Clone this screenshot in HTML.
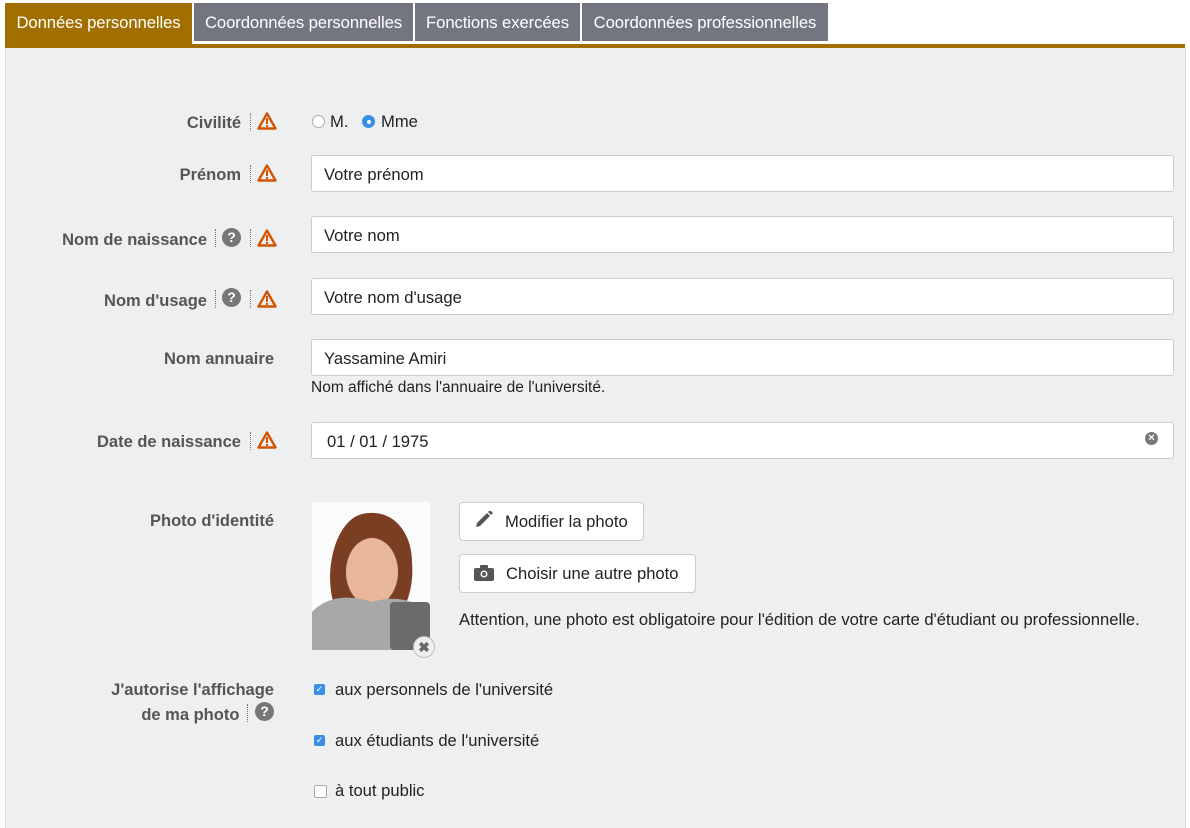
<!DOCTYPE html>
<html><head><meta charset="utf-8"><style>
body{margin:0;background:#fff;font-family:"Liberation Sans",Arial,sans-serif;width:1190px;height:821px;overflow:hidden;position:relative;color:#333}
.tab{position:absolute;top:3px;height:38px;line-height:39px;color:#fff;font-size:16.7px;text-align:center;background:#737680;letter-spacing:-0.1px}
.bar{position:absolute;left:5px;top:44px;width:1180px;height:4px;background:#a06f00}
.panel{position:absolute;left:5px;top:48px;width:1179px;height:780px;background:#eeeff1;border-left:1px solid #ddd;border-right:1px solid #ddd}
.lbl{position:absolute;font-weight:bold;font-size:16.5px;color:#555;text-align:right}
.inp{position:absolute;left:311px;width:863px;height:37px;background:#fff;border:1px solid #ccc;border-radius:3px;font-size:16.6px;line-height:37px;padding-left:12px;box-sizing:border-box;color:#222}
.sep{position:absolute;width:0;height:18px;border-left:1px dotted #777}
.warn{position:absolute;width:20px;height:18px}
.help{position:absolute;width:19px;height:19px;border-radius:50%;background:#777;color:#fff;font-weight:bold;font-size:14px;text-align:center;line-height:19px}
.txt{position:absolute;font-size:16.6px;color:#222}
.btn{position:absolute;left:459px;height:39px;background:#fff;border:1px solid #ccc;border-radius:4px;box-sizing:border-box;font-size:16.6px;line-height:37px;color:#222}
.cb{position:absolute;left:314px;width:11px;height:11px;border-radius:2px}
</style></head><body>
<div class="tab" style="left:5px;width:187px;background:#a06f00;height:44px">Données personnelles</div>
<div class="tab" style="left:194px;width:219px">Coordonnées personnelles</div>
<div class="tab" style="left:415px;width:165px">Fonctions exercées</div>
<div class="tab" style="left:582px;width:246px">Coordonnées professionnelles</div>
<div class="bar"></div>
<div class="panel"></div>

<svg width="0" height="0" style="position:absolute"><defs><symbol id="w" viewBox="0 0 20 18"><path d="M10 1.5 L18.5 16.5 H1.5 Z" fill="none" stroke="#d35400" stroke-width="2.4" stroke-linejoin="round"/><rect x="9" y="6" width="2" height="6" fill="#d35400"/><rect x="9" y="13" width="2" height="2" fill="#d35400"/></symbol></defs></svg>

<div class="lbl" style="right:949px;top:114px">Civilité</div>
<div class="sep" style="left:250px;top:113px"></div><svg class="warn" style="left:257px;top:112px"><use href="#w"/></svg>
<div style="position:absolute;left:312px;top:115px;width:11px;height:11px;border:1px solid #aaa;border-radius:50%;background:#fff"></div>
<div class="txt" style="left:330px;top:112px">M.</div>
<div style="position:absolute;left:362px;top:115px;width:13px;height:13px;border-radius:50%;background:#3a8ee6"><div style="margin:4.5px;width:4px;height:4px;border-radius:50%;background:#fff"></div></div>
<div class="txt" style="left:381px;top:112px">Mme</div>

<div class="lbl" style="right:949px;top:166px">Prénom</div>
<div class="sep" style="left:250px;top:165px"></div><svg class="warn" style="left:257px;top:164px"><use href="#w"/></svg>
<div class="inp" style="top:155px">Votre prénom</div>

<div class="lbl" style="right:983px;top:231px">Nom de naissance</div>
<div class="sep" style="left:215px;top:229px"></div><div class="help" style="left:222px;top:228px">?</div>
<div class="sep" style="left:250px;top:229px"></div><svg class="warn" style="left:257px;top:229px"><use href="#w"/></svg>
<div class="inp" style="top:216px">Votre nom</div>

<div class="lbl" style="right:983px;top:292px">Nom d'usage</div>
<div class="sep" style="left:215px;top:290px"></div><div class="help" style="left:222px;top:288px">?</div>
<div class="sep" style="left:250px;top:290px"></div><svg class="warn" style="left:257px;top:290px"><use href="#w"/></svg>
<div class="inp" style="top:278px">Votre nom d'usage</div>

<div class="lbl" style="right:916px;top:350px">Nom annuaire</div>
<div class="inp" style="top:339px">Yassamine Amiri</div>
<div class="txt" style="left:311px;top:379px;font-size:15.5px">Nom affiché dans l'annuaire de l'université.</div>

<div class="lbl" style="right:949px;top:433px">Date de naissance</div>
<div class="sep" style="left:250px;top:432px"></div><svg class="warn" style="left:257px;top:431px"><use href="#w"/></svg>
<div class="inp" style="top:422px;padding-left:15px">01 / 01 / 1975</div>
<div style="position:absolute;left:1145px;top:432px;width:13px;height:13px;border-radius:50%;background:#777;color:#fff;font-size:11px;line-height:13px;text-align:center;font-weight:bold">×</div>

<div class="lbl" style="right:916px;top:512px">Photo d'identité</div>
<svg style="position:absolute;left:312px;top:502px" width="118" height="148" viewBox="0 0 118 148">
<rect width="118" height="148" fill="#fbfbfb"/>
<path d="M25 110 C10 80 20 20 50 12 C80 5 100 30 100 60 C102 85 95 100 90 110 Z" fill="#7a3f22"/>
<ellipse cx="60" cy="70" rx="26" ry="34" fill="#e8b69a"/>
<path d="M0 148 V110 C15 95 35 92 60 100 C85 92 105 100 118 110 V148 Z" fill="#a8a8a8"/>
<rect x="78" y="100" width="40" height="48" rx="4" fill="#6d6a6a"/>
</svg>
<div style="position:absolute;left:413px;top:636px;width:20px;height:20px;border-radius:50%;background:#eee;border:1px solid #bbb;color:#666;font-weight:bold;font-size:14px;text-align:center;line-height:20px">✖</div>
<div class="btn" style="top:502px;width:185px;padding-left:45px">Modifier la photo</div>
<svg style="position:absolute;left:474px;top:511px" width="20" height="18" viewBox="0 0 20 18"><path d="M2 16 L3 12 L13 2 L16 5 L6 15 Z" fill="#555"/><path d="M14 1 L16 -1 L19 2 L17 4 Z" fill="#555"/></svg>
<div class="btn" style="top:554px;width:237px;padding-left:46px">Choisir une autre photo</div>
<svg style="position:absolute;left:474px;top:564px" width="20" height="17" viewBox="0 0 20 17"><rect x="0" y="4" width="20" height="13" rx="2" fill="#555"/><rect x="6" y="1" width="8" height="5" rx="1" fill="#555"/><circle cx="10" cy="10" r="3.5" fill="#fff"/><circle cx="10" cy="10" r="2" fill="#555"/></svg>
<div class="txt" style="left:459px;top:610px">Attention, une photo est obligatoire pour l'édition de votre carte d'étudiant ou professionnelle.</div>

<div class="lbl" style="right:916px;top:678px;line-height:25px">J'autorise l'affichage<br>de ma photo <span style="display:inline-block;width:30px"></span></div>
<div class="sep" style="left:247px;top:704px"></div><div class="help" style="left:255px;top:702px">?</div>
<div class="cb" style="top:684px;background:#3a8ee6;color:#fff;font-size:9px;line-height:11px;text-align:center">✓</div>
<div class="txt" style="left:335px;top:680px">aux personnels de l'université</div>
<div class="cb" style="top:735px;background:#3a8ee6;color:#fff;font-size:9px;line-height:11px;text-align:center">✓</div>
<div class="txt" style="left:335px;top:731px">aux étudiants de l'université</div>
<div class="cb" style="top:785px;background:#fff;border:1px solid #aaa"></div>
<div class="txt" style="left:335px;top:781px">à tout public</div>
</body></html>
